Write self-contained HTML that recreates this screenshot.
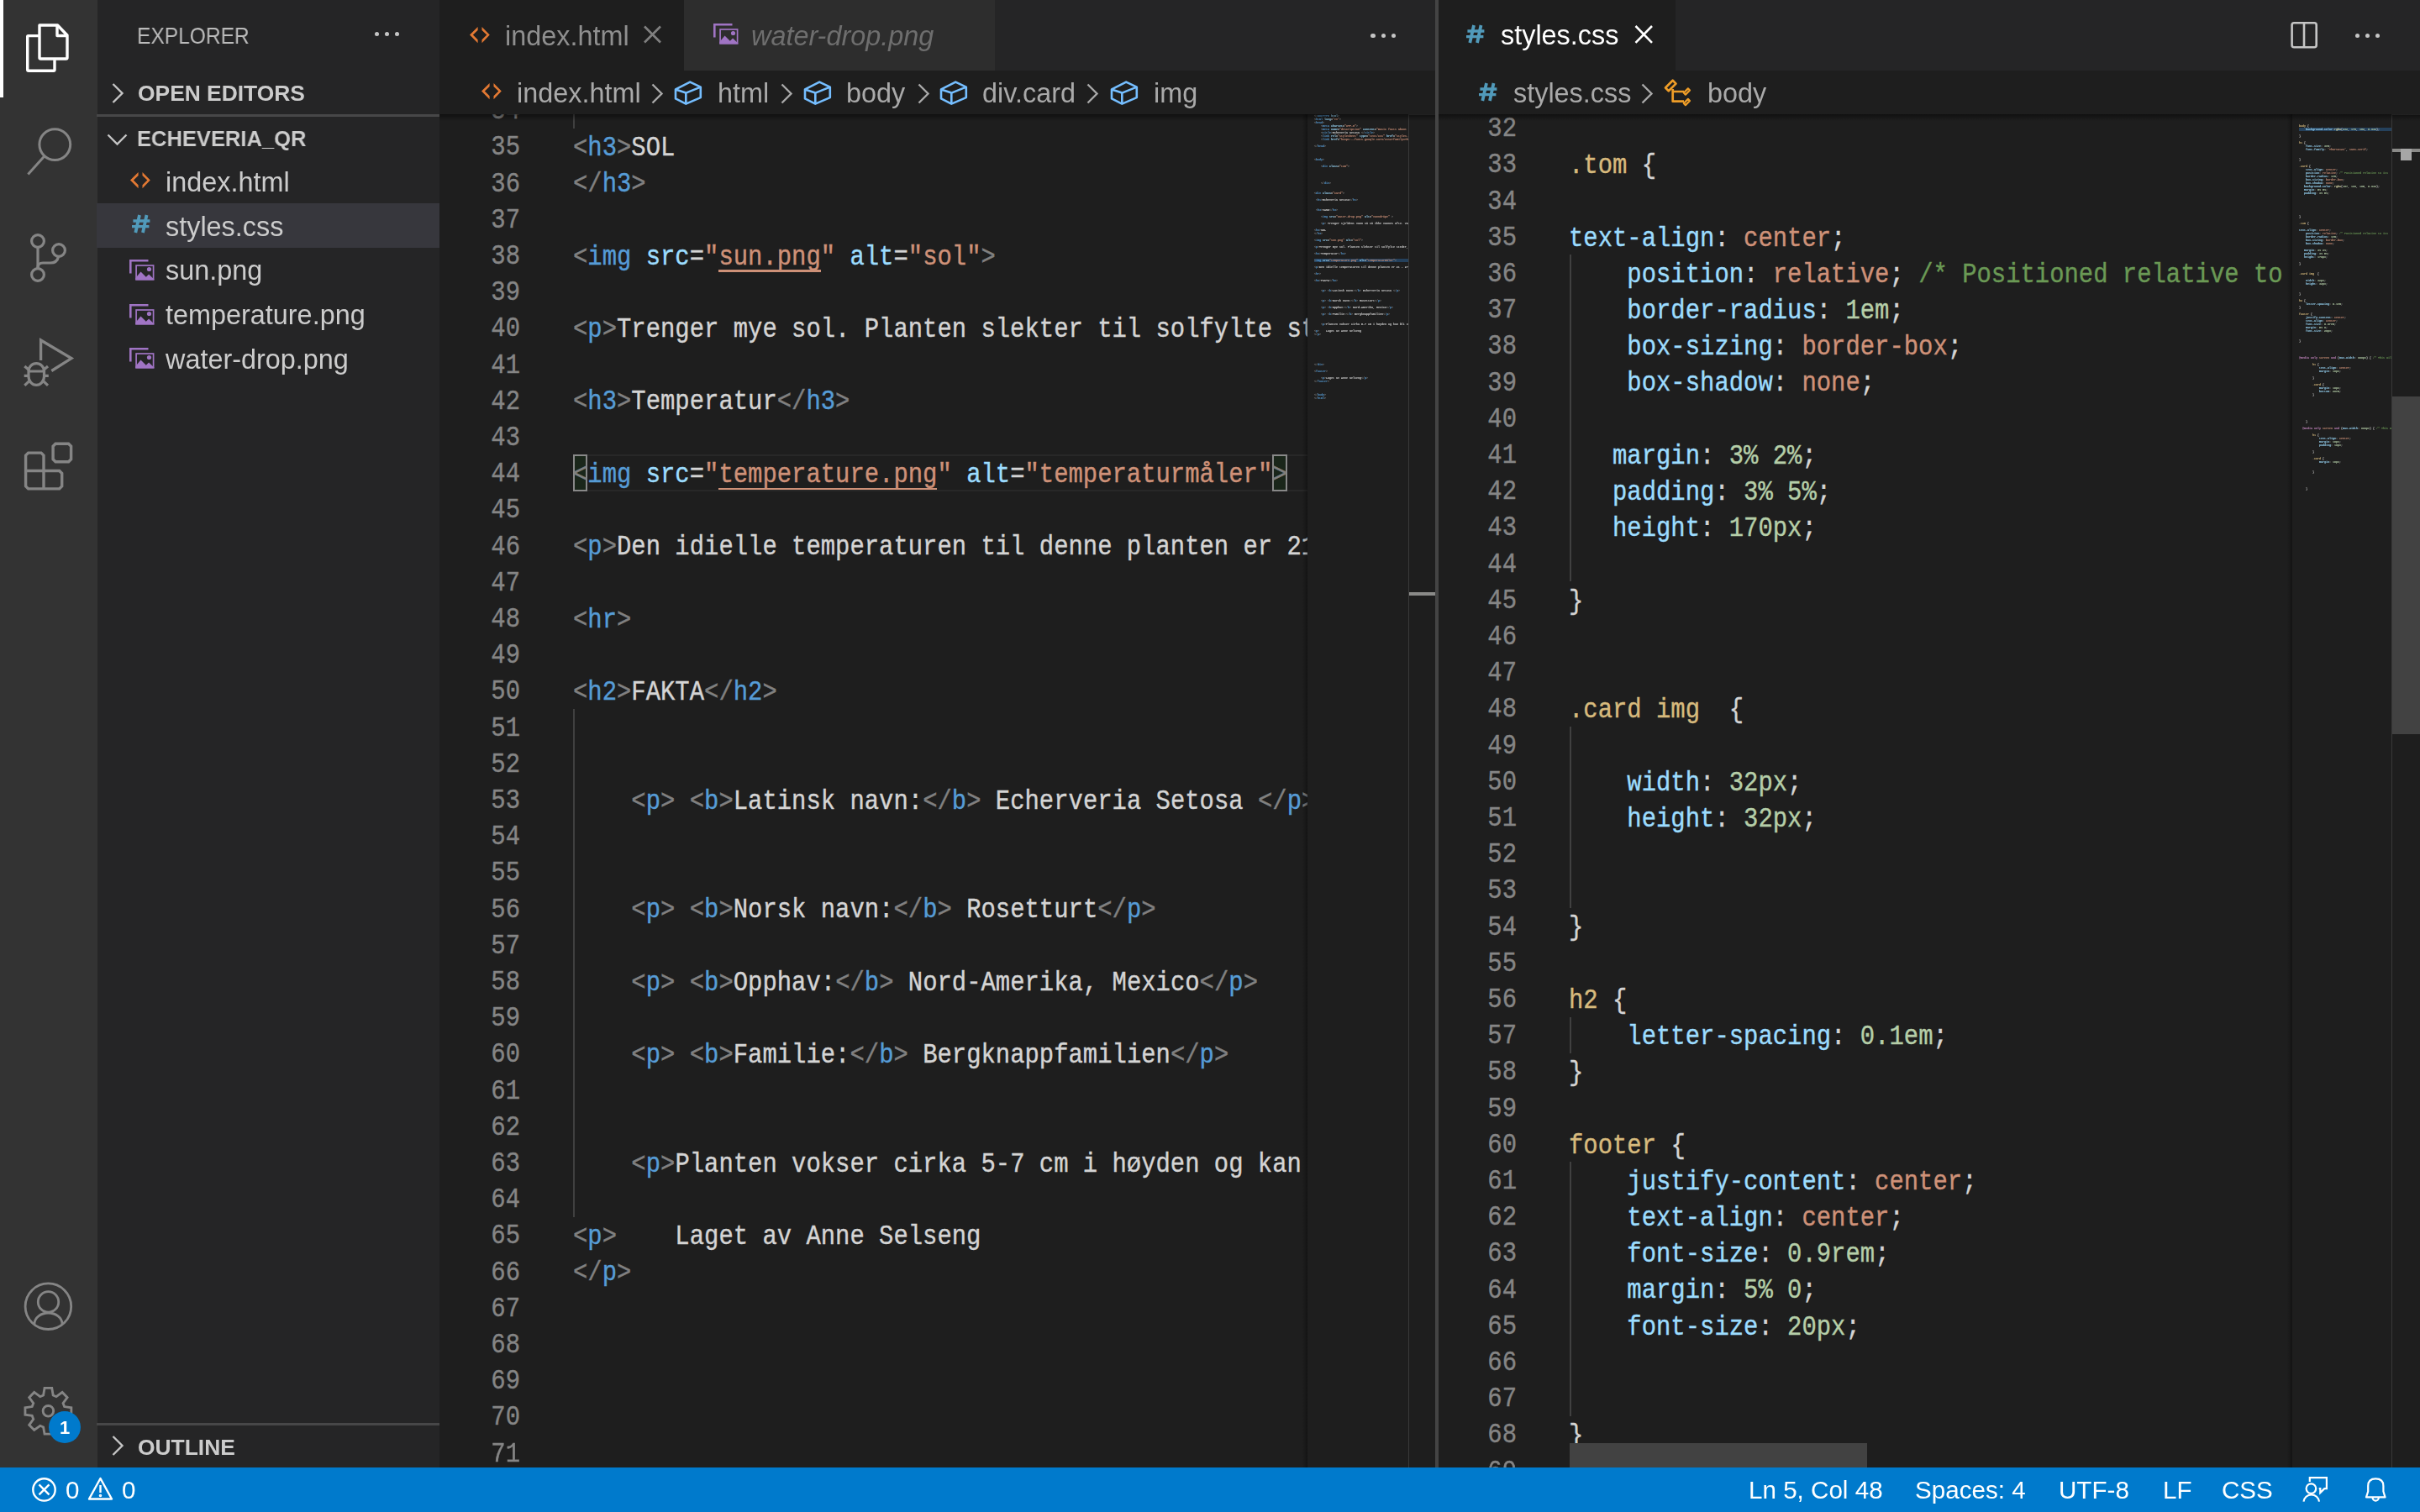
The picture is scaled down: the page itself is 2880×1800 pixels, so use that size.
<!DOCTYPE html><html><head><meta charset="utf-8"><style>

html,body{margin:0;padding:0;width:2880px;height:1800px;overflow:hidden;background:#1e1e1e}
.t{position:absolute;white-space:pre;line-height:0;height:0;will-change:transform}
.code{position:absolute;white-space:pre;font-family:'Liberation Mono',monospace;font-size:28.9px;line-height:0;height:0;transform:scaleY(1.12);transform-origin:0 7.5px;-webkit-text-stroke:0.35px currentColor}
.code span{-webkit-text-stroke:0.35px}
.lnum{position:absolute;width:200px;text-align:right;white-space:pre;font-family:'Liberation Mono',monospace;font-size:28.9px;line-height:0;height:0;color:#858585;transform:scaleY(1.12);transform-origin:0 7.5px;-webkit-text-stroke:0.35px #858585}
.mini{position:absolute;white-space:pre;font-family:'Liberation Mono',monospace;font-size:3.33px;line-height:4px;height:4px;font-weight:bold;will-change:transform}
svg{position:absolute;overflow:visible}

</style></head><body>
<div style="position:absolute;left:0.00px;top:0.00px;width:116.00px;height:1747.20px;background:#333333;"></div>
<div style="position:absolute;left:0.00px;top:0.00px;width:4.00px;height:116.00px;background:#ffffff;"></div>
<svg style="left:0;top:0" width="116" height="1748" viewBox="0 0 116 1748" fill="none">
<g stroke="#ffffff" stroke-width="3.4" stroke-linejoin="round">
<path d="M47 42.6 H33.5 Q32.7 42.6 32.7 43.5 V83 Q32.7 84.3 34 84.3 H63.8 Q65 84.3 65 83 V71.3"/>
<path d="M47 30 V68.5 Q47 70 48.5 70 H78.5 Q80 70 80 68.5 V42 L68.5 30 Z"/>
<path d="M68 30 V42.5 H80"/>
</g>
<g stroke="#858585" stroke-width="3" stroke-linecap="butt">
<circle cx="65.3" cy="172.1" r="18.4"/>
<path d="M52.3 186.5 L33.4 207.5"/>
</g>
<g stroke="#858585" stroke-width="3.2">
<circle cx="45" cy="287" r="7.4"/>
<circle cx="45" cy="327" r="7.4"/>
<circle cx="70" cy="298" r="7.4"/>
<path d="M45 294.6 V319.4"/>
<path d="M69.5 305.6 Q68 313 60 313 H51 Q45 313 45 319"/>
</g>
<g stroke="#858585" stroke-width="3.3" stroke-linejoin="miter">
<path d="M48.6 429 V405 L85 426.6 L61.3 441.5"/>
</g>
<g stroke="#858585" stroke-width="3.2">
<path d="M34 442 A9.25 9.3 0 0 1 52.5 442 V448 A9.25 10.4 0 0 1 34 448 Z M34 442 H52.5"/>
<path d="M29.3 436 L34.5 440.5 M57 436 L51.8 440.5 M28.7 447.4 H33 M53.5 447.4 H57.8 M29.3 458.8 L34.5 453.8 M57 458.8 L51.8 453.8"/>
</g>
<g stroke="#858585" stroke-width="3.4" stroke-linejoin="miter">
<path d="M30.6 542.1 L33.6 539.1 H49 L52 542.1 V560.5 H70.7 L73.7 563.5 V578.9 L70.7 581.9 H33.6 L30.6 578.9 Z"/>
<path d="M30.6 560.5 H52 V581.9"/>
<path d="M63.1 531.2 L66.1 528.2 H81.6 L84.6 531.2 V546.7 L81.6 549.7 H66.1 L63.1 546.7 Z"/>
</g>
<g stroke="#858585" stroke-width="2.8">
<circle cx="57.4" cy="1555.2" r="27.3"/>
<circle cx="57.5" cy="1549.9" r="12.2"/>
<path d="M41 1576 A16.5 13 0 0 1 74 1576"/>
</g>
<g stroke="#858585" stroke-width="3.0" stroke-linejoin="miter" transform="translate(57.4 1679.8) scale(0.95) translate(-57.4 -1679.8)">
<path id="gear" d="M52.8 1651 H62 L63.5 1660 L67.5 1661.8 L75 1656.3 L81.3 1662.8 L76 1670 L77.6 1674.3 L86.3 1675.6 V1684.4 L77.6 1685.7 L76 1690 L81.3 1697.2 L75 1703.6 L67.5 1698.2 L63.5 1700 L62 1708.6 H52.8 L51.3 1700 L47.3 1698.2 L39.8 1703.6 L33.5 1697.2 L38.8 1690 L37.2 1685.7 L28.5 1684.4 V1675.6 L37.2 1674.3 L38.8 1670 L33.5 1662.8 L39.8 1656.3 L47.3 1661.8 L51.3 1660 Z"/>
<circle cx="57.4" cy="1679.8" r="6.6"/>
</g>
<circle cx="77" cy="1699" r="19" fill="#007acc"/>
</svg>
<div class="t" style="left:70.50px;top:1699.50px;font-family:'Liberation Sans',sans-serif;font-size:22px;color:#ffffff;font-weight:bold;font-style:normal;">1</div>
<div style="position:absolute;left:116.00px;top:0.00px;width:408.00px;height:1747.20px;background:#252526;"></div>
<div class="t" style="left:163.20px;top:42.80px;font-family:'Liberation Sans',sans-serif;font-size:27.6px;color:#bbbbbb;font-weight:normal;font-style:normal;transform:scaleX(0.89);transform-origin:0 0">EXPLORER</div>
<div style="position:absolute;left:445.60px;top:37.90px;width:5.2px;height:5.2px;border-radius:50%;background:#c5c5c5"></div>
<div style="position:absolute;left:458.30px;top:37.90px;width:5.2px;height:5.2px;border-radius:50%;background:#c5c5c5"></div>
<div style="position:absolute;left:470.10px;top:37.90px;width:5.2px;height:5.2px;border-radius:50%;background:#c5c5c5"></div>
<svg style="left:0;top:0" width="524" height="1748" fill="none"><path d="M134.5 100 L145.5 111 L134.5 122" stroke="#c5c5c5" stroke-width="2.4"/><path d="M128.5 160.5 L139.5 171.5 L150.5 160.5" stroke="#c5c5c5" stroke-width="2.4"/><path d="M134.5 1710 L145.5 1721 L134.5 1732" stroke="#c5c5c5" stroke-width="2.4"/></svg>
<div class="t" style="left:164.00px;top:111.00px;font-family:'Liberation Sans',sans-serif;font-size:26.4px;color:#cccccc;font-weight:bold;font-style:normal;">OPEN EDITORS</div>
<div style="position:absolute;left:115.20px;top:136.20px;width:408.00px;height:2.40px;background:#474748;"></div>
<div class="t" style="left:163.20px;top:164.70px;font-family:'Liberation Sans',sans-serif;font-size:26.4px;color:#cccccc;font-weight:bold;font-style:normal;transform:scaleX(0.967);transform-origin:0 0">ECHEVERIA_QR</div>
<div style="position:absolute;left:115.20px;top:242.40px;width:408.00px;height:52.80px;background:#37373d;"></div>
<svg style="left:155.40px;top:204.80px" width="26.0" height="21.0" viewBox="0 0 26 21" fill="#e37933"><path d="M9.6 0 L0 9.6 L9.6 19.2 V15.3 L3.9 9.6 L9.6 3.9 Z M14.5 0 L23.8 9.6 L14.5 19.2 V15.3 L20.3 9.6 L14.5 3.9 Z"/></svg>
<div class="t" style="left:197.30px;top:216.70px;font-family:'Liberation Sans',sans-serif;font-size:32.4px;color:#cccccc;font-weight:normal;font-style:normal;">index.html</div>
<svg style="left:156.60px;top:256.00px" width="22.0" height="21.0" viewBox="0 0 22 21" fill="none" stroke="#519aba"><path d="M9 0 L4.3 21 M17.5 0 L13 21" stroke-width="3.8"/><path d="M1.4 7 H21.4 M0 13.7 H20.4" stroke-width="3.3"/></svg>
<div class="t" style="left:197.30px;top:269.50px;font-family:'Liberation Sans',sans-serif;font-size:32.4px;color:#cccccc;font-weight:normal;font-style:normal;">styles.css</div>
<svg style="left:153.50px;top:308.70px" width="32" height="28" fill="none"><path d="M1.3 16.5 V1.3 H22.5" stroke="#a074c4" stroke-width="2.6"/><rect x="8.1" y="7.0" width="20.5" height="16.6" stroke="#a074c4" stroke-width="1.7"/><path d="M7.3 24.4 V22 L13.5 14.5 L19.8 20.8 L23.1 17.5 L29.4 23.5 V24.4 Z" fill="#a074c4"/><circle cx="23.5" cy="11.5" r="2.6" fill="#a074c4"/></svg>
<div class="t" style="left:197.30px;top:322.30px;font-family:'Liberation Sans',sans-serif;font-size:32.4px;color:#cccccc;font-weight:normal;font-style:normal;">sun.png</div>
<svg style="left:153.50px;top:361.50px" width="32" height="28" fill="none"><path d="M1.3 16.5 V1.3 H22.5" stroke="#a074c4" stroke-width="2.6"/><rect x="8.1" y="7.0" width="20.5" height="16.6" stroke="#a074c4" stroke-width="1.7"/><path d="M7.3 24.4 V22 L13.5 14.5 L19.8 20.8 L23.1 17.5 L29.4 23.5 V24.4 Z" fill="#a074c4"/><circle cx="23.5" cy="11.5" r="2.6" fill="#a074c4"/></svg>
<div class="t" style="left:197.30px;top:375.10px;font-family:'Liberation Sans',sans-serif;font-size:32.4px;color:#cccccc;font-weight:normal;font-style:normal;">temperature.png</div>
<svg style="left:153.50px;top:414.30px" width="32" height="28" fill="none"><path d="M1.3 16.5 V1.3 H22.5" stroke="#a074c4" stroke-width="2.6"/><rect x="8.1" y="7.0" width="20.5" height="16.6" stroke="#a074c4" stroke-width="1.7"/><path d="M7.3 24.4 V22 L13.5 14.5 L19.8 20.8 L23.1 17.5 L29.4 23.5 V24.4 Z" fill="#a074c4"/><circle cx="23.5" cy="11.5" r="2.6" fill="#a074c4"/></svg>
<div class="t" style="left:197.30px;top:427.90px;font-family:'Liberation Sans',sans-serif;font-size:32.4px;color:#cccccc;font-weight:normal;font-style:normal;">water-drop.png</div>
<div style="position:absolute;left:115.20px;top:1694.40px;width:408.00px;height:2.40px;background:#474748;"></div>
<div class="t" style="left:164.00px;top:1723.10px;font-family:'Liberation Sans',sans-serif;font-size:26.4px;color:#cccccc;font-weight:bold;font-style:normal;">OUTLINE</div>
<div style="position:absolute;left:523.20px;top:0.00px;width:1184.80px;height:84.00px;background:#252526;"></div>
<div style="position:absolute;left:523.20px;top:0.00px;width:290.80px;height:84.00px;background:#1e1e1e;"></div>
<div style="position:absolute;left:814.00px;top:0.00px;width:369.80px;height:84.00px;background:#2d2d2d;"></div>
<svg style="left:559.00px;top:31.60px" width="26.0" height="21.0" viewBox="0 0 26 21" fill="#e37933"><path d="M9.6 0 L0 9.6 L9.6 19.2 V15.3 L3.9 9.6 L9.6 3.9 Z M14.5 0 L23.8 9.6 L14.5 19.2 V15.3 L20.3 9.6 L14.5 3.9 Z"/></svg>
<div class="t" style="left:600.80px;top:42.60px;font-family:'Liberation Sans',sans-serif;font-size:32.4px;color:#8f8f8f;font-weight:normal;font-style:normal;">index.html</div>
<svg style="left:0;top:0" width="2880" height="140" fill="none"><path d="M767 31.5 L786 50.5 M786 31.5 L767 50.5" stroke="#808080" stroke-width="2.6"/></svg>
<svg style="left:848.60px;top:28.00px" width="32" height="28" fill="none"><path d="M1.3 16.5 V1.3 H22.5" stroke="#a074c4" stroke-width="2.6"/><rect x="8.1" y="7.0" width="20.5" height="16.6" stroke="#a074c4" stroke-width="1.7"/><path d="M7.3 24.4 V22 L13.5 14.5 L19.8 20.8 L23.1 17.5 L29.4 23.5 V24.4 Z" fill="#a074c4"/><circle cx="23.5" cy="11.5" r="2.6" fill="#a074c4"/></svg>
<div class="t" style="left:894.00px;top:42.60px;font-family:'Liberation Sans',sans-serif;font-size:32.4px;color:#6e6e6e;font-weight:normal;font-style:italic;">water-drop.png</div>
<div style="position:absolute;left:1631.40px;top:40.20px;width:5.2px;height:5.2px;border-radius:50%;background:#c5c5c5"></div>
<div style="position:absolute;left:1643.90px;top:40.20px;width:5.2px;height:5.2px;border-radius:50%;background:#c5c5c5"></div>
<div style="position:absolute;left:1655.80px;top:40.20px;width:5.2px;height:5.2px;border-radius:50%;background:#c5c5c5"></div>
<div style="position:absolute;left:523.20px;top:84.00px;width:1184.80px;height:52.00px;background:#1e1e1e;"></div>
<svg style="left:572.90px;top:99.20px" width="26.0" height="21.0" viewBox="0 0 26 21" fill="#e37933"><path d="M9.6 0 L0 9.6 L9.6 19.2 V15.3 L3.9 9.6 L9.6 3.9 Z M14.5 0 L23.8 9.6 L14.5 19.2 V15.3 L20.3 9.6 L14.5 3.9 Z"/></svg>
<div class="t" style="left:614.80px;top:111.00px;font-family:'Liberation Sans',sans-serif;font-size:32.4px;color:#a9a9a9;font-weight:normal;font-style:normal;">index.html</div>
<svg style="left:775.40px;top:99.00px" width="16" height="26" fill="none"><path d="M1.5 1.5 L12.5 12.5 L1.5 23.5" stroke="#a9a9a9" stroke-width="2.4"/></svg>
<svg style="left:802.00px;top:96.40px" width="36" height="32" fill="none"><path d="M2 10.4 L19.2 1.6 L31.8 7.6 V20.1 L14.3 27.6 L2 21.4 Z M2 10.4 L14.3 14.6 L31.8 7.6 M14.3 14.6 V27.6" stroke="#75beff" stroke-width="2.6" stroke-linejoin="round"/></svg>
<div class="t" style="left:853.60px;top:111.00px;font-family:'Liberation Sans',sans-serif;font-size:32.4px;color:#a9a9a9;font-weight:normal;font-style:normal;">html</div>
<svg style="left:929.00px;top:99.00px" width="16" height="26" fill="none"><path d="M1.5 1.5 L12.5 12.5 L1.5 23.5" stroke="#a9a9a9" stroke-width="2.4"/></svg>
<svg style="left:956.00px;top:96.40px" width="36" height="32" fill="none"><path d="M2 10.4 L19.2 1.6 L31.8 7.6 V20.1 L14.3 27.6 L2 21.4 Z M2 10.4 L14.3 14.6 L31.8 7.6 M14.3 14.6 V27.6" stroke="#75beff" stroke-width="2.6" stroke-linejoin="round"/></svg>
<div class="t" style="left:1007.20px;top:111.00px;font-family:'Liberation Sans',sans-serif;font-size:32.4px;color:#a9a9a9;font-weight:normal;font-style:normal;">body</div>
<svg style="left:1092.00px;top:99.00px" width="16" height="26" fill="none"><path d="M1.5 1.5 L12.5 12.5 L1.5 23.5" stroke="#a9a9a9" stroke-width="2.4"/></svg>
<svg style="left:1118.40px;top:96.40px" width="36" height="32" fill="none"><path d="M2 10.4 L19.2 1.6 L31.8 7.6 V20.1 L14.3 27.6 L2 21.4 Z M2 10.4 L14.3 14.6 L31.8 7.6 M14.3 14.6 V27.6" stroke="#75beff" stroke-width="2.6" stroke-linejoin="round"/></svg>
<div class="t" style="left:1169.00px;top:111.00px;font-family:'Liberation Sans',sans-serif;font-size:32.4px;color:#a9a9a9;font-weight:normal;font-style:normal;">div.card</div>
<svg style="left:1293.30px;top:99.00px" width="16" height="26" fill="none"><path d="M1.5 1.5 L12.5 12.5 L1.5 23.5" stroke="#a9a9a9" stroke-width="2.4"/></svg>
<svg style="left:1320.80px;top:96.40px" width="36" height="32" fill="none"><path d="M2 10.4 L19.2 1.6 L31.8 7.6 V20.1 L14.3 27.6 L2 21.4 Z M2 10.4 L14.3 14.6 L31.8 7.6 M14.3 14.6 V27.6" stroke="#75beff" stroke-width="2.6" stroke-linejoin="round"/></svg>
<div class="t" style="left:1372.70px;top:111.00px;font-family:'Liberation Sans',sans-serif;font-size:32.4px;color:#a9a9a9;font-weight:normal;font-style:normal;">img</div>
<div style="position:absolute;left:523.2px;top:136px;width:1032.8px;height:1611.2px;overflow:hidden;background:#1e1e1e">
<div style="position:absolute;left:158.80px;top:405.40px;width:874.00px;height:40.80px;border-top:2.4px solid #282828;border-bottom:2.4px solid #282828;box-sizing:border-box;height:44.00px"></div>
<div style="position:absolute;left:158.80px;top:405.40px;width:17.34px;height:44.00px;border:2.2px solid #888888;background:rgba(0,100,0,0.12);box-sizing:border-box"></div>
<div style="position:absolute;left:991.12px;top:405.40px;width:17.34px;height:44.00px;border:2.2px solid #888888;background:rgba(0,100,0,0.12);box-sizing:border-box"></div>
<div style="position:absolute;left:332.20px;top:185.40px;width:121.38px;height:2.4px;background:#ce9178"></div>
<div style="position:absolute;left:332.20px;top:444.60px;width:260.10px;height:2.4px;background:#ce9178"></div>
<div style="position:absolute;left:158.80px;top:-26.60px;width:2.4px;height:43.20px;background:#404040"></div>
<div style="position:absolute;left:158.80px;top:707.80px;width:2.4px;height:604.80px;background:#404040"></div>
<div class="lnum" style="left:-104.20px;top:-1.90px">34</div>
<div class="lnum" style="left:-104.20px;top:41.30px">35</div>
<div class="code" style="left:158.80px;top:42.00px"><span style="color:#808080">&lt;</span><span style="color:#569cd6">h3</span><span style="color:#808080">&gt;</span><span style="color:#d4d4d4">SOL</span></div>
<div class="lnum" style="left:-104.20px;top:84.50px">36</div>
<div class="code" style="left:158.80px;top:85.20px"><span style="color:#808080">&lt;/</span><span style="color:#569cd6">h3</span><span style="color:#808080">&gt;</span></div>
<div class="lnum" style="left:-104.20px;top:127.70px">37</div>
<div class="lnum" style="left:-104.20px;top:170.90px">38</div>
<div class="code" style="left:158.80px;top:171.60px"><span style="color:#808080">&lt;</span><span style="color:#569cd6">img</span><span style="color:#d4d4d4"> </span><span style="color:#9cdcfe">src</span><span style="color:#d4d4d4">=</span><span style="color:#ce9178">"sun.png"</span><span style="color:#d4d4d4"> </span><span style="color:#9cdcfe">alt</span><span style="color:#d4d4d4">=</span><span style="color:#ce9178">"sol"</span><span style="color:#808080">&gt;</span></div>
<div class="lnum" style="left:-104.20px;top:214.10px">39</div>
<div class="lnum" style="left:-104.20px;top:257.30px">40</div>
<div class="code" style="left:158.80px;top:258.00px"><span style="color:#808080">&lt;</span><span style="color:#569cd6">p</span><span style="color:#808080">&gt;</span><span style="color:#d4d4d4">Trenger mye sol. Planten slekter til solfylte steder, </span></div>
<div class="lnum" style="left:-104.20px;top:300.50px">41</div>
<div class="lnum" style="left:-104.20px;top:343.70px">42</div>
<div class="code" style="left:158.80px;top:344.40px"><span style="color:#808080">&lt;</span><span style="color:#569cd6">h3</span><span style="color:#808080">&gt;</span><span style="color:#d4d4d4">Temperatur</span><span style="color:#808080">&lt;/</span><span style="color:#569cd6">h3</span><span style="color:#808080">&gt;</span></div>
<div class="lnum" style="left:-104.20px;top:386.90px">43</div>
<div class="lnum" style="left:-104.20px;top:430.10px">44</div>
<div class="code" style="left:158.80px;top:430.80px"><span style="color:#808080">&lt;</span><span style="color:#569cd6">img</span><span style="color:#d4d4d4"> </span><span style="color:#9cdcfe">src</span><span style="color:#d4d4d4">=</span><span style="color:#ce9178">"temperature.png"</span><span style="color:#d4d4d4"> </span><span style="color:#9cdcfe">alt</span><span style="color:#d4d4d4">=</span><span style="color:#ce9178">"temperaturmåler"</span><span style="color:#808080">&gt;</span></div>
<div class="lnum" style="left:-104.20px;top:473.30px">45</div>
<div class="lnum" style="left:-104.20px;top:516.50px">46</div>
<div class="code" style="left:158.80px;top:517.20px"><span style="color:#808080">&lt;</span><span style="color:#569cd6">p</span><span style="color:#808080">&gt;</span><span style="color:#d4d4d4">Den idielle temperaturen til denne planten er 21 - 27</span></div>
<div class="lnum" style="left:-104.20px;top:559.70px">47</div>
<div class="lnum" style="left:-104.20px;top:602.90px">48</div>
<div class="code" style="left:158.80px;top:603.60px"><span style="color:#808080">&lt;</span><span style="color:#569cd6">hr</span><span style="color:#808080">&gt;</span></div>
<div class="lnum" style="left:-104.20px;top:646.10px">49</div>
<div class="lnum" style="left:-104.20px;top:689.30px">50</div>
<div class="code" style="left:158.80px;top:690.00px"><span style="color:#808080">&lt;</span><span style="color:#569cd6">h2</span><span style="color:#808080">&gt;</span><span style="color:#d4d4d4">FAKTA</span><span style="color:#808080">&lt;/</span><span style="color:#569cd6">h2</span><span style="color:#808080">&gt;</span></div>
<div class="lnum" style="left:-104.20px;top:732.50px">51</div>
<div class="lnum" style="left:-104.20px;top:775.70px">52</div>
<div class="lnum" style="left:-104.20px;top:818.90px">53</div>
<div class="code" style="left:158.80px;top:819.60px"><span style="color:#d4d4d4">    </span><span style="color:#808080">&lt;</span><span style="color:#569cd6">p</span><span style="color:#808080">&gt;</span><span style="color:#d4d4d4"> </span><span style="color:#808080">&lt;</span><span style="color:#569cd6">b</span><span style="color:#808080">&gt;</span><span style="color:#d4d4d4">Latinsk navn:</span><span style="color:#808080">&lt;/</span><span style="color:#569cd6">b</span><span style="color:#808080">&gt;</span><span style="color:#d4d4d4"> Echerveria Setosa </span><span style="color:#808080">&lt;/</span><span style="color:#569cd6">p</span><span style="color:#808080">&gt;</span></div>
<div class="lnum" style="left:-104.20px;top:862.10px">54</div>
<div class="lnum" style="left:-104.20px;top:905.30px">55</div>
<div class="lnum" style="left:-104.20px;top:948.50px">56</div>
<div class="code" style="left:158.80px;top:949.20px"><span style="color:#d4d4d4">    </span><span style="color:#808080">&lt;</span><span style="color:#569cd6">p</span><span style="color:#808080">&gt;</span><span style="color:#d4d4d4"> </span><span style="color:#808080">&lt;</span><span style="color:#569cd6">b</span><span style="color:#808080">&gt;</span><span style="color:#d4d4d4">Norsk navn:</span><span style="color:#808080">&lt;/</span><span style="color:#569cd6">b</span><span style="color:#808080">&gt;</span><span style="color:#d4d4d4"> Rosetturt</span><span style="color:#808080">&lt;/</span><span style="color:#569cd6">p</span><span style="color:#808080">&gt;</span></div>
<div class="lnum" style="left:-104.20px;top:991.70px">57</div>
<div class="lnum" style="left:-104.20px;top:1034.90px">58</div>
<div class="code" style="left:158.80px;top:1035.60px"><span style="color:#d4d4d4">    </span><span style="color:#808080">&lt;</span><span style="color:#569cd6">p</span><span style="color:#808080">&gt;</span><span style="color:#d4d4d4"> </span><span style="color:#808080">&lt;</span><span style="color:#569cd6">b</span><span style="color:#808080">&gt;</span><span style="color:#d4d4d4">Opphav:</span><span style="color:#808080">&lt;/</span><span style="color:#569cd6">b</span><span style="color:#808080">&gt;</span><span style="color:#d4d4d4"> Nord-Amerika, Mexico</span><span style="color:#808080">&lt;/</span><span style="color:#569cd6">p</span><span style="color:#808080">&gt;</span></div>
<div class="lnum" style="left:-104.20px;top:1078.10px">59</div>
<div class="lnum" style="left:-104.20px;top:1121.30px">60</div>
<div class="code" style="left:158.80px;top:1122.00px"><span style="color:#d4d4d4">    </span><span style="color:#808080">&lt;</span><span style="color:#569cd6">p</span><span style="color:#808080">&gt;</span><span style="color:#d4d4d4"> </span><span style="color:#808080">&lt;</span><span style="color:#569cd6">b</span><span style="color:#808080">&gt;</span><span style="color:#d4d4d4">Familie:</span><span style="color:#808080">&lt;/</span><span style="color:#569cd6">b</span><span style="color:#808080">&gt;</span><span style="color:#d4d4d4"> Bergknappfamilien</span><span style="color:#808080">&lt;/</span><span style="color:#569cd6">p</span><span style="color:#808080">&gt;</span></div>
<div class="lnum" style="left:-104.20px;top:1164.50px">61</div>
<div class="lnum" style="left:-104.20px;top:1207.70px">62</div>
<div class="lnum" style="left:-104.20px;top:1250.90px">63</div>
<div class="code" style="left:158.80px;top:1251.60px"><span style="color:#d4d4d4">    </span><span style="color:#808080">&lt;</span><span style="color:#569cd6">p</span><span style="color:#808080">&gt;</span><span style="color:#d4d4d4">Planten vokser cirka 5-7 cm i høyden og kan bli 3</span></div>
<div class="lnum" style="left:-104.20px;top:1294.10px">64</div>
<div class="lnum" style="left:-104.20px;top:1337.30px">65</div>
<div class="code" style="left:158.80px;top:1338.00px"><span style="color:#808080">&lt;</span><span style="color:#569cd6">p</span><span style="color:#808080">&gt;</span><span style="color:#d4d4d4">    Laget av Anne Selseng</span></div>
<div class="lnum" style="left:-104.20px;top:1380.50px">66</div>
<div class="code" style="left:158.80px;top:1381.20px"><span style="color:#808080">&lt;/</span><span style="color:#569cd6">p</span><span style="color:#808080">&gt;</span></div>
<div class="lnum" style="left:-104.20px;top:1423.70px">67</div>
<div class="lnum" style="left:-104.20px;top:1466.90px">68</div>
<div class="lnum" style="left:-104.20px;top:1510.10px">69</div>
<div class="lnum" style="left:-104.20px;top:1553.30px">70</div>
<div class="lnum" style="left:-104.20px;top:1596.50px">71</div>
<div class="lnum" style="left:-104.20px;top:1639.70px">72</div>
</div>
<div style="position:absolute;left:1556px;top:136px;width:120px;height:1611.2px;overflow:hidden;background:#1e1e1e;">
<div style="position:absolute;left:8px;top:172.00px;width:120px;height:4px;background:#25415c"></div>
<div class="mini" style="left:8px;top:0.00px"><span style="color:#808080">&lt;!</span><span style="color:#569cd6">DOCTYPE</span><span style="color:#d4d4d4"> </span><span style="color:#9cdcfe">html</span><span style="color:#808080">&gt;</span></div>
<div class="mini" style="left:8px;top:4.00px"><span style="color:#808080">&lt;</span><span style="color:#569cd6">html</span><span style="color:#d4d4d4"> </span><span style="color:#9cdcfe">lang</span><span style="color:#d4d4d4">=</span><span style="color:#ce9178">"en"</span><span style="color:#808080">&gt;</span></div>
<div class="mini" style="left:8px;top:8.00px"><span style="color:#808080">&lt;</span><span style="color:#569cd6">head</span><span style="color:#808080">&gt;</span></div>
<div class="mini" style="left:8px;top:12.00px"><span style="color:#d4d4d4">    </span><span style="color:#808080">&lt;</span><span style="color:#569cd6">meta</span><span style="color:#d4d4d4"> </span><span style="color:#9cdcfe">charset</span><span style="color:#d4d4d4">=</span><span style="color:#ce9178">"UTF-8"</span><span style="color:#808080">&gt;</span></div>
<div class="mini" style="left:8px;top:16.00px"><span style="color:#d4d4d4">    </span><span style="color:#808080">&lt;</span><span style="color:#569cd6">meta</span><span style="color:#d4d4d4"> </span><span style="color:#9cdcfe">name</span><span style="color:#d4d4d4">=</span><span style="color:#ce9178">"description"</span><span style="color:#d4d4d4"> </span><span style="color:#9cdcfe">content</span><span style="color:#d4d4d4">=</span><span style="color:#ce9178">"Basic facts about Echeveria Setosa"</span><span style="color:#808080">&gt;</span></div>
<div class="mini" style="left:8px;top:20.00px"><span style="color:#d4d4d4">    </span><span style="color:#808080">&lt;</span><span style="color:#569cd6">title</span><span style="color:#808080">&gt;</span><span style="color:#d4d4d4">Echeveria Setosa </span><span style="color:#808080">&lt;/</span><span style="color:#569cd6">title</span><span style="color:#808080">&gt;</span></div>
<div class="mini" style="left:8px;top:24.00px"><span style="color:#d4d4d4">    </span><span style="color:#808080">&lt;</span><span style="color:#569cd6">link</span><span style="color:#d4d4d4"> </span><span style="color:#9cdcfe">rel</span><span style="color:#d4d4d4">=</span><span style="color:#ce9178">"stylesheet"</span><span style="color:#d4d4d4"> </span><span style="color:#9cdcfe">type</span><span style="color:#d4d4d4">=</span><span style="color:#ce9178">"text/css"</span><span style="color:#d4d4d4"> </span><span style="color:#9cdcfe">href</span><span style="color:#d4d4d4">=</span><span style="color:#ce9178">"styles.css"</span><span style="color:#808080">&gt;</span></div>
<div class="mini" style="left:8px;top:28.00px"><span style="color:#d4d4d4">    </span><span style="color:#808080">&lt;</span><span style="color:#569cd6">link</span><span style="color:#d4d4d4"> </span><span style="color:#9cdcfe">href</span><span style="color:#d4d4d4">=</span><span style="color:#ce9178">"hxxps:--fonts.gooqle.corn/css2?family=Tharsa-Regular"</span><span style="color:#808080">&gt;</span></div>
<div class="mini" style="left:8px;top:36.00px"><span style="color:#808080">&lt;/</span><span style="color:#569cd6">head</span><span style="color:#808080">&gt;</span></div>
<div class="mini" style="left:8px;top:52.00px"><span style="color:#808080">&lt;</span><span style="color:#569cd6">body</span><span style="color:#808080">&gt;</span></div>
<div class="mini" style="left:8px;top:60.00px"><span style="color:#d4d4d4">    </span><span style="color:#808080">&lt;</span><span style="color:#569cd6">div</span><span style="color:#d4d4d4"> </span><span style="color:#9cdcfe">class</span><span style="color:#d4d4d4">=</span><span style="color:#ce9178">"tom"</span><span style="color:#808080">&gt;</span></div>
<div class="mini" style="left:8px;top:80.00px"><span style="color:#d4d4d4">    </span><span style="color:#808080">&lt;/</span><span style="color:#569cd6">div</span><span style="color:#808080">&gt;</span></div>
<div class="mini" style="left:8px;top:92.00px"><span style="color:#808080">&lt;</span><span style="color:#569cd6">div</span><span style="color:#d4d4d4"> </span><span style="color:#9cdcfe">class</span><span style="color:#d4d4d4">=</span><span style="color:#ce9178">"card"</span><span style="color:#808080">&gt;</span></div>
<div class="mini" style="left:8px;top:100.00px"><span style="color:#d4d4d4"> </span><span style="color:#808080">&lt;</span><span style="color:#569cd6">h1</span><span style="color:#808080">&gt;</span><span style="color:#d4d4d4">Echeveria Setosa</span><span style="color:#808080">&lt;/</span><span style="color:#569cd6">h1</span><span style="color:#808080">&gt;</span></div>
<div class="mini" style="left:8px;top:112.00px"><span style="color:#d4d4d4"> </span><span style="color:#808080">&lt;</span><span style="color:#569cd6">h3</span><span style="color:#808080">&gt;</span><span style="color:#d4d4d4">VANN</span><span style="color:#808080">&lt;/</span><span style="color:#569cd6">h3</span><span style="color:#808080">&gt;</span></div>
<div class="mini" style="left:8px;top:120.00px"><span style="color:#d4d4d4">    </span><span style="color:#808080">&lt;</span><span style="color:#569cd6">img</span><span style="color:#d4d4d4"> </span><span style="color:#9cdcfe">src</span><span style="color:#d4d4d4">=</span><span style="color:#ce9178">"water-drop.png"</span><span style="color:#d4d4d4"> </span><span style="color:#9cdcfe">alt</span><span style="color:#d4d4d4">=</span><span style="color:#ce9178">"vanndråpe"</span><span style="color:#d4d4d4"> </span><span style="color:#808080">&gt;</span></div>
<div class="mini" style="left:8px;top:128.00px"><span style="color:#d4d4d4">    </span><span style="color:#808080">&lt;</span><span style="color:#569cd6">p</span><span style="color:#808080">&gt;</span><span style="color:#d4d4d4"> Trenger sjeldent vann så så ikke vannes ofte. Vann</span></div>
<div class="mini" style="left:8px;top:136.00px"><span style="color:#808080">&lt;</span><span style="color:#569cd6">h3</span><span style="color:#808080">&gt;</span><span style="color:#d4d4d4">SOL</span></div>
<div class="mini" style="left:8px;top:140.00px"><span style="color:#808080">&lt;/</span><span style="color:#569cd6">h3</span><span style="color:#808080">&gt;</span></div>
<div class="mini" style="left:8px;top:148.00px"><span style="color:#808080">&lt;</span><span style="color:#569cd6">img</span><span style="color:#d4d4d4"> </span><span style="color:#9cdcfe">src</span><span style="color:#d4d4d4">=</span><span style="color:#ce9178">"sun.png"</span><span style="color:#d4d4d4"> </span><span style="color:#9cdcfe">alt</span><span style="color:#d4d4d4">=</span><span style="color:#ce9178">"sol"</span><span style="color:#808080">&gt;</span></div>
<div class="mini" style="left:8px;top:156.00px"><span style="color:#808080">&lt;</span><span style="color:#569cd6">p</span><span style="color:#808080">&gt;</span><span style="color:#d4d4d4">Trenger mye sol. Planten slekter til solfylte steder, </span></div>
<div class="mini" style="left:8px;top:164.00px"><span style="color:#808080">&lt;</span><span style="color:#569cd6">h3</span><span style="color:#808080">&gt;</span><span style="color:#d4d4d4">Temperatur</span><span style="color:#808080">&lt;/</span><span style="color:#569cd6">h3</span><span style="color:#808080">&gt;</span></div>
<div class="mini" style="left:8px;top:172.00px"><span style="color:#808080">&lt;</span><span style="color:#569cd6">img</span><span style="color:#d4d4d4"> </span><span style="color:#9cdcfe">src</span><span style="color:#d4d4d4">=</span><span style="color:#ce9178">"temperature.png"</span><span style="color:#d4d4d4"> </span><span style="color:#9cdcfe">alt</span><span style="color:#d4d4d4">=</span><span style="color:#ce9178">"temperaturmåler"</span><span style="color:#808080">&gt;</span></div>
<div class="mini" style="left:8px;top:180.00px"><span style="color:#808080">&lt;</span><span style="color:#569cd6">p</span><span style="color:#808080">&gt;</span><span style="color:#d4d4d4">Den idielle temperaturen til denne planten er 21 - 27</span></div>
<div class="mini" style="left:8px;top:188.00px"><span style="color:#808080">&lt;</span><span style="color:#569cd6">hr</span><span style="color:#808080">&gt;</span></div>
<div class="mini" style="left:8px;top:196.00px"><span style="color:#808080">&lt;</span><span style="color:#569cd6">h2</span><span style="color:#808080">&gt;</span><span style="color:#d4d4d4">FAKTA</span><span style="color:#808080">&lt;/</span><span style="color:#569cd6">h2</span><span style="color:#808080">&gt;</span></div>
<div class="mini" style="left:8px;top:208.00px"><span style="color:#d4d4d4">    </span><span style="color:#808080">&lt;</span><span style="color:#569cd6">p</span><span style="color:#808080">&gt;</span><span style="color:#d4d4d4"> </span><span style="color:#808080">&lt;</span><span style="color:#569cd6">b</span><span style="color:#808080">&gt;</span><span style="color:#d4d4d4">Latinsk navn:</span><span style="color:#808080">&lt;/</span><span style="color:#569cd6">b</span><span style="color:#808080">&gt;</span><span style="color:#d4d4d4"> Echerveria Setosa </span><span style="color:#808080">&lt;/</span><span style="color:#569cd6">p</span><span style="color:#808080">&gt;</span></div>
<div class="mini" style="left:8px;top:220.00px"><span style="color:#d4d4d4">    </span><span style="color:#808080">&lt;</span><span style="color:#569cd6">p</span><span style="color:#808080">&gt;</span><span style="color:#d4d4d4"> </span><span style="color:#808080">&lt;</span><span style="color:#569cd6">b</span><span style="color:#808080">&gt;</span><span style="color:#d4d4d4">Norsk navn:</span><span style="color:#808080">&lt;/</span><span style="color:#569cd6">b</span><span style="color:#808080">&gt;</span><span style="color:#d4d4d4"> Rosetturt</span><span style="color:#808080">&lt;/</span><span style="color:#569cd6">p</span><span style="color:#808080">&gt;</span></div>
<div class="mini" style="left:8px;top:228.00px"><span style="color:#d4d4d4">    </span><span style="color:#808080">&lt;</span><span style="color:#569cd6">p</span><span style="color:#808080">&gt;</span><span style="color:#d4d4d4"> </span><span style="color:#808080">&lt;</span><span style="color:#569cd6">b</span><span style="color:#808080">&gt;</span><span style="color:#d4d4d4">Opphav:</span><span style="color:#808080">&lt;/</span><span style="color:#569cd6">b</span><span style="color:#808080">&gt;</span><span style="color:#d4d4d4"> Nord-Amerika, Mexico</span><span style="color:#808080">&lt;/</span><span style="color:#569cd6">p</span><span style="color:#808080">&gt;</span></div>
<div class="mini" style="left:8px;top:236.00px"><span style="color:#d4d4d4">    </span><span style="color:#808080">&lt;</span><span style="color:#569cd6">p</span><span style="color:#808080">&gt;</span><span style="color:#d4d4d4"> </span><span style="color:#808080">&lt;</span><span style="color:#569cd6">b</span><span style="color:#808080">&gt;</span><span style="color:#d4d4d4">Familie:</span><span style="color:#808080">&lt;/</span><span style="color:#569cd6">b</span><span style="color:#808080">&gt;</span><span style="color:#d4d4d4"> Bergknappfamilien</span><span style="color:#808080">&lt;/</span><span style="color:#569cd6">p</span><span style="color:#808080">&gt;</span></div>
<div class="mini" style="left:8px;top:248.00px"><span style="color:#d4d4d4">    </span><span style="color:#808080">&lt;</span><span style="color:#569cd6">p</span><span style="color:#808080">&gt;</span><span style="color:#d4d4d4">Planten vokser cirka 5-7 cm i høyden og kan bli 3</span></div>
<div class="mini" style="left:8px;top:256.00px"><span style="color:#808080">&lt;</span><span style="color:#569cd6">p</span><span style="color:#808080">&gt;</span><span style="color:#d4d4d4">    Laget av Anne Selseng</span></div>
<div class="mini" style="left:8px;top:260.00px"><span style="color:#808080">&lt;/</span><span style="color:#569cd6">p</span><span style="color:#808080">&gt;</span></div>
<div class="mini" style="left:8px;top:296.00px"><span style="color:#808080">&lt;/</span><span style="color:#569cd6">div</span><span style="color:#808080">&gt;</span></div>
<div class="mini" style="left:8px;top:304.00px"><span style="color:#808080">&lt;</span><span style="color:#569cd6">footer</span><span style="color:#808080">&gt;</span></div>
<div class="mini" style="left:8px;top:312.00px"><span style="color:#d4d4d4">    </span><span style="color:#808080">&lt;</span><span style="color:#569cd6">p</span><span style="color:#808080">&gt;</span><span style="color:#d4d4d4">Laget av Anne Selseng</span><span style="color:#808080">&lt;/</span><span style="color:#569cd6">p</span><span style="color:#808080">&gt;</span></div>
<div class="mini" style="left:8px;top:316.00px"><span style="color:#808080">&lt;/</span><span style="color:#569cd6">footer</span><span style="color:#808080">&gt;</span></div>
<div class="mini" style="left:8px;top:332.00px"><span style="color:#808080">&lt;/</span><span style="color:#569cd6">body</span><span style="color:#808080">&gt;</span></div>
<div class="mini" style="left:8px;top:336.00px"><span style="color:#808080">&lt;/</span><span style="color:#569cd6">html</span><span style="color:#808080">&gt;</span></div>
</div>
<div style="position:absolute;left:1550px;top:136px;width:6px;height:1611.2px;background:linear-gradient(to right,rgba(0,0,0,0),rgba(0,0,0,0.35))"></div>
<div style="position:absolute;left:1676.00px;top:136.00px;width:32.00px;height:1611.20px;background:#1e1e1e;"></div>
<div style="position:absolute;left:1676.00px;top:136.00px;width:1.20px;height:1611.20px;background:#3a3a3a;"></div>
<div style="position:absolute;left:1676.00px;top:136.00px;width:32.00px;height:1.20px;background:#3a3a3a;"></div>
<div style="position:absolute;left:1677.00px;top:704.80px;width:31.00px;height:4.20px;background:#8a8a88;"></div>
<div style="position:absolute;left:1708.00px;top:0.00px;width:4.00px;height:1747.20px;background:#444444;"></div>
<div style="position:absolute;left:1712.00px;top:0.00px;width:1168.00px;height:84.00px;background:#252526;"></div>
<div style="position:absolute;left:1712.00px;top:0.00px;width:282.00px;height:84.00px;background:#1e1e1e;"></div>
<svg style="left:1744.90px;top:29.90px" width="22.0" height="21.0" viewBox="0 0 22 21" fill="none" stroke="#519aba"><path d="M9 0 L4.3 21 M17.5 0 L13 21" stroke-width="3.8"/><path d="M1.4 7 H21.4 M0 13.7 H20.4" stroke-width="3.3"/></svg>
<div class="t" style="left:1786.40px;top:42.30px;font-family:'Liberation Sans',sans-serif;font-size:32.4px;color:#ffffff;font-weight:normal;font-style:normal;">styles.css</div>
<svg style="left:0;top:0" width="2880" height="140" fill="none"><path d="M1946.5 31 L1966 50.8 M1966 31 L1946.5 50.8" stroke="#ffffff" stroke-width="2.6"/></svg>
<svg style="left:2720px;top:20px" width="50" height="50" fill="none"><rect x="7.6" y="7.3" width="29.1" height="28.9" rx="2.5" stroke="#c5c5c5" stroke-width="2.6"/><path d="M22 7.3 V36.2" stroke="#c5c5c5" stroke-width="2.6"/></svg>
<div style="position:absolute;left:2802.90px;top:40.20px;width:5.2px;height:5.2px;border-radius:50%;background:#c5c5c5"></div>
<div style="position:absolute;left:2815.10px;top:40.20px;width:5.2px;height:5.2px;border-radius:50%;background:#c5c5c5"></div>
<div style="position:absolute;left:2827.00px;top:40.20px;width:5.2px;height:5.2px;border-radius:50%;background:#c5c5c5"></div>
<div style="position:absolute;left:1712.00px;top:84.00px;width:1168.00px;height:52.00px;background:#1e1e1e;"></div>
<svg style="left:1760.00px;top:98.50px" width="22.0" height="21.0" viewBox="0 0 22 21" fill="none" stroke="#519aba"><path d="M9 0 L4.3 21 M17.5 0 L13 21" stroke-width="3.8"/><path d="M1.4 7 H21.4 M0 13.7 H20.4" stroke-width="3.3"/></svg>
<div class="t" style="left:1800.50px;top:110.60px;font-family:'Liberation Sans',sans-serif;font-size:32.4px;color:#a9a9a9;font-weight:normal;font-style:normal;">styles.css</div>
<svg style="left:1953.00px;top:98.50px" width="16" height="26" fill="none"><path d="M1.5 1.5 L12.5 12.5 L1.5 23.5" stroke="#a9a9a9" stroke-width="2.4"/></svg>
<svg style="left:1970px;top:88px" width="50" height="44" fill="none" stroke="#ee9d28" stroke-width="2.7" stroke-linejoin="round"><path d="M20.7 7.8 L24.5 11.6 L15.8 20.3 L12 16.5 Z"/><path d="M38.9 17.4 L41.0 19.5 L35.9 24.6 L33.8 22.5 Z" stroke-width="2.2"/><path d="M38.9 29.9 L41.0 32 L35.9 37.1 L33.8 35 Z" stroke-width="2.2"/><path d="M20.7 18 V32.7 H34 M20.7 21 H34"/></svg>
<div class="t" style="left:2032.00px;top:110.60px;font-family:'Liberation Sans',sans-serif;font-size:32.4px;color:#a9a9a9;font-weight:normal;font-style:normal;">body</div>
<div style="position:absolute;left:1712px;top:136px;width:1016px;height:1611.2px;overflow:hidden;background:#1e1e1e">
<div style="position:absolute;left:156.00px;top:167.30px;width:2.4px;height:388.80px;background:#404040"></div>
<div style="position:absolute;left:156.00px;top:728.90px;width:2.4px;height:216.00px;background:#404040"></div>
<div style="position:absolute;left:156.00px;top:1074.50px;width:2.4px;height:43.20px;background:#404040"></div>
<div style="position:absolute;left:156.00px;top:1247.30px;width:2.4px;height:302.40px;background:#404040"></div>
<div class="lnum" style="left:-107.00px;top:19.20px">32</div>
<div class="lnum" style="left:-107.00px;top:62.40px">33</div>
<div class="code" style="left:155.00px;top:63.10px"><span style="color:#d7ba7d">.tom</span><span style="color:#d4d4d4"> </span><span style="color:#d4d4d4">{</span></div>
<div class="lnum" style="left:-107.00px;top:105.60px">34</div>
<div class="lnum" style="left:-107.00px;top:148.80px">35</div>
<div class="code" style="left:155.00px;top:149.50px"><span style="color:#9cdcfe">text-align</span><span style="color:#d4d4d4">:</span><span style="color:#d4d4d4"> </span><span style="color:#ce9178">center</span><span style="color:#d4d4d4">;</span></div>
<div class="lnum" style="left:-107.00px;top:192.00px">36</div>
<div class="code" style="left:155.00px;top:192.70px"><span style="color:#d4d4d4">    </span><span style="color:#9cdcfe">position</span><span style="color:#d4d4d4">:</span><span style="color:#d4d4d4"> </span><span style="color:#ce9178">relative</span><span style="color:#d4d4d4">;</span><span style="color:#d4d4d4"> </span><span style="color:#6a9955">/* Positioned relative to its</span></div>
<div class="lnum" style="left:-107.00px;top:235.20px">37</div>
<div class="code" style="left:155.00px;top:235.90px"><span style="color:#d4d4d4">    </span><span style="color:#9cdcfe">border-radius</span><span style="color:#d4d4d4">:</span><span style="color:#d4d4d4"> </span><span style="color:#b5cea8">1em</span><span style="color:#d4d4d4">;</span></div>
<div class="lnum" style="left:-107.00px;top:278.40px">38</div>
<div class="code" style="left:155.00px;top:279.10px"><span style="color:#d4d4d4">    </span><span style="color:#9cdcfe">box-sizing</span><span style="color:#d4d4d4">:</span><span style="color:#d4d4d4"> </span><span style="color:#ce9178">border-box</span><span style="color:#d4d4d4">;</span></div>
<div class="lnum" style="left:-107.00px;top:321.60px">39</div>
<div class="code" style="left:155.00px;top:322.30px"><span style="color:#d4d4d4">    </span><span style="color:#9cdcfe">box-shadow</span><span style="color:#d4d4d4">:</span><span style="color:#d4d4d4"> </span><span style="color:#ce9178">none</span><span style="color:#d4d4d4">;</span></div>
<div class="lnum" style="left:-107.00px;top:364.80px">40</div>
<div class="lnum" style="left:-107.00px;top:408.00px">41</div>
<div class="code" style="left:155.00px;top:408.70px"><span style="color:#d4d4d4">   </span><span style="color:#9cdcfe">margin</span><span style="color:#d4d4d4">:</span><span style="color:#d4d4d4"> </span><span style="color:#b5cea8">3%</span><span style="color:#d4d4d4"> </span><span style="color:#b5cea8">2%</span><span style="color:#d4d4d4">;</span></div>
<div class="lnum" style="left:-107.00px;top:451.20px">42</div>
<div class="code" style="left:155.00px;top:451.90px"><span style="color:#d4d4d4">   </span><span style="color:#9cdcfe">padding</span><span style="color:#d4d4d4">:</span><span style="color:#d4d4d4"> </span><span style="color:#b5cea8">3%</span><span style="color:#d4d4d4"> </span><span style="color:#b5cea8">5%</span><span style="color:#d4d4d4">;</span></div>
<div class="lnum" style="left:-107.00px;top:494.40px">43</div>
<div class="code" style="left:155.00px;top:495.10px"><span style="color:#d4d4d4">   </span><span style="color:#9cdcfe">height</span><span style="color:#d4d4d4">:</span><span style="color:#d4d4d4"> </span><span style="color:#b5cea8">170px</span><span style="color:#d4d4d4">;</span></div>
<div class="lnum" style="left:-107.00px;top:537.60px">44</div>
<div class="lnum" style="left:-107.00px;top:580.80px">45</div>
<div class="code" style="left:155.00px;top:581.50px"><span style="color:#d4d4d4">}</span></div>
<div class="lnum" style="left:-107.00px;top:624.00px">46</div>
<div class="lnum" style="left:-107.00px;top:667.20px">47</div>
<div class="lnum" style="left:-107.00px;top:710.40px">48</div>
<div class="code" style="left:155.00px;top:711.10px"><span style="color:#d7ba7d">.card</span><span style="color:#d4d4d4"> </span><span style="color:#d7ba7d">img</span><span style="color:#d4d4d4">  </span><span style="color:#d4d4d4">{</span></div>
<div class="lnum" style="left:-107.00px;top:753.60px">49</div>
<div class="lnum" style="left:-107.00px;top:796.80px">50</div>
<div class="code" style="left:155.00px;top:797.50px"><span style="color:#d4d4d4">    </span><span style="color:#9cdcfe">width</span><span style="color:#d4d4d4">:</span><span style="color:#d4d4d4"> </span><span style="color:#b5cea8">32px</span><span style="color:#d4d4d4">;</span></div>
<div class="lnum" style="left:-107.00px;top:840.00px">51</div>
<div class="code" style="left:155.00px;top:840.70px"><span style="color:#d4d4d4">    </span><span style="color:#9cdcfe">height</span><span style="color:#d4d4d4">:</span><span style="color:#d4d4d4"> </span><span style="color:#b5cea8">32px</span><span style="color:#d4d4d4">;</span></div>
<div class="lnum" style="left:-107.00px;top:883.20px">52</div>
<div class="lnum" style="left:-107.00px;top:926.40px">53</div>
<div class="lnum" style="left:-107.00px;top:969.60px">54</div>
<div class="code" style="left:155.00px;top:970.30px"><span style="color:#d4d4d4">}</span></div>
<div class="lnum" style="left:-107.00px;top:1012.80px">55</div>
<div class="lnum" style="left:-107.00px;top:1056.00px">56</div>
<div class="code" style="left:155.00px;top:1056.70px"><span style="color:#d7ba7d">h2</span><span style="color:#d4d4d4"> </span><span style="color:#d4d4d4">{</span></div>
<div class="lnum" style="left:-107.00px;top:1099.20px">57</div>
<div class="code" style="left:155.00px;top:1099.90px"><span style="color:#d4d4d4">    </span><span style="color:#9cdcfe">letter-spacing</span><span style="color:#d4d4d4">:</span><span style="color:#d4d4d4"> </span><span style="color:#b5cea8">0.1em</span><span style="color:#d4d4d4">;</span></div>
<div class="lnum" style="left:-107.00px;top:1142.40px">58</div>
<div class="code" style="left:155.00px;top:1143.10px"><span style="color:#d4d4d4">}</span></div>
<div class="lnum" style="left:-107.00px;top:1185.60px">59</div>
<div class="lnum" style="left:-107.00px;top:1228.80px">60</div>
<div class="code" style="left:155.00px;top:1229.50px"><span style="color:#d7ba7d">footer</span><span style="color:#d4d4d4"> </span><span style="color:#d4d4d4">{</span></div>
<div class="lnum" style="left:-107.00px;top:1272.00px">61</div>
<div class="code" style="left:155.00px;top:1272.70px"><span style="color:#d4d4d4">    </span><span style="color:#9cdcfe">justify-content</span><span style="color:#d4d4d4">:</span><span style="color:#d4d4d4"> </span><span style="color:#ce9178">center</span><span style="color:#d4d4d4">;</span></div>
<div class="lnum" style="left:-107.00px;top:1315.20px">62</div>
<div class="code" style="left:155.00px;top:1315.90px"><span style="color:#d4d4d4">    </span><span style="color:#9cdcfe">text-align</span><span style="color:#d4d4d4">:</span><span style="color:#d4d4d4"> </span><span style="color:#ce9178">center</span><span style="color:#d4d4d4">;</span></div>
<div class="lnum" style="left:-107.00px;top:1358.40px">63</div>
<div class="code" style="left:155.00px;top:1359.10px"><span style="color:#d4d4d4">    </span><span style="color:#9cdcfe">font-size</span><span style="color:#d4d4d4">:</span><span style="color:#d4d4d4"> </span><span style="color:#b5cea8">0.9rem</span><span style="color:#d4d4d4">;</span></div>
<div class="lnum" style="left:-107.00px;top:1401.60px">64</div>
<div class="code" style="left:155.00px;top:1402.30px"><span style="color:#d4d4d4">    </span><span style="color:#9cdcfe">margin</span><span style="color:#d4d4d4">:</span><span style="color:#d4d4d4"> </span><span style="color:#b5cea8">5%</span><span style="color:#d4d4d4"> </span><span style="color:#b5cea8">0</span><span style="color:#d4d4d4">;</span></div>
<div class="lnum" style="left:-107.00px;top:1444.80px">65</div>
<div class="code" style="left:155.00px;top:1445.50px"><span style="color:#d4d4d4">    </span><span style="color:#9cdcfe">font-size</span><span style="color:#d4d4d4">:</span><span style="color:#d4d4d4"> </span><span style="color:#b5cea8">20px</span><span style="color:#d4d4d4">;</span></div>
<div class="lnum" style="left:-107.00px;top:1488.00px">66</div>
<div class="lnum" style="left:-107.00px;top:1531.20px">67</div>
<div class="lnum" style="left:-107.00px;top:1574.40px">68</div>
<div class="code" style="left:155.00px;top:1575.10px"><span style="color:#d4d4d4">}</span></div>
<div class="lnum" style="left:-107.00px;top:1617.60px">69</div>
<div class="lnum" style="left:-107.00px;top:1660.80px">70</div>
</div>
<div style="position:absolute;left:2728px;top:136px;width:118px;height:1611.2px;overflow:hidden;background:#1e1e1e;">
<div style="position:absolute;left:8px;top:16.00px;width:118px;height:4px;background:#25415c"></div>
<div class="mini" style="left:8px;top:12.00px"><span style="color:#d7ba7d">body</span><span style="color:#d4d4d4"> </span><span style="color:#d4d4d4">{</span></div>
<div class="mini" style="left:8px;top:16.00px"><span style="color:#d4d4d4">    </span><span style="color:#9cdcfe">background-color</span><span style="color:#d4d4d4">:</span><span style="color:#dcdcaa">rgba</span><span style="color:#d4d4d4">(</span><span style="color:#b5cea8">232</span><span style="color:#d4d4d4">,</span><span style="color:#d4d4d4"> </span><span style="color:#b5cea8">170</span><span style="color:#d4d4d4">,</span><span style="color:#d4d4d4"> </span><span style="color:#b5cea8">182</span><span style="color:#d4d4d4">,</span><span style="color:#d4d4d4"> </span><span style="color:#b5cea8">0.932</span><span style="color:#d4d4d4">)</span><span style="color:#d4d4d4">;</span></div>
<div class="mini" style="left:8px;top:24.00px"><span style="color:#d4d4d4">}</span></div>
<div class="mini" style="left:8px;top:32.00px"><span style="color:#d7ba7d">h1</span><span style="color:#d4d4d4"> </span><span style="color:#d4d4d4">{</span></div>
<div class="mini" style="left:8px;top:36.00px"><span style="color:#d4d4d4">    </span><span style="color:#9cdcfe">font-size</span><span style="color:#d4d4d4">:</span><span style="color:#d4d4d4"> </span><span style="color:#b5cea8">3em</span><span style="color:#d4d4d4">;</span></div>
<div class="mini" style="left:8px;top:40.00px"><span style="color:#d4d4d4">    </span><span style="color:#9cdcfe">font-family</span><span style="color:#d4d4d4">:</span><span style="color:#d4d4d4"> </span><span style="color:#ce9178">'Tharsa123'</span><span style="color:#d4d4d4">,</span><span style="color:#d4d4d4"> </span><span style="color:#ce9178">sans-serif</span><span style="color:#d4d4d4">;</span></div>
<div class="mini" style="left:8px;top:52.00px"><span style="color:#d4d4d4">}</span></div>
<div class="mini" style="left:8px;top:60.00px"><span style="color:#d7ba7d">.card</span><span style="color:#d4d4d4"> </span><span style="color:#d4d4d4">{</span></div>
<div class="mini" style="left:8px;top:64.00px"><span style="color:#d4d4d4">    </span><span style="color:#9cdcfe">text-align</span><span style="color:#d4d4d4">:</span><span style="color:#d4d4d4"> </span><span style="color:#ce9178">center</span><span style="color:#d4d4d4">;</span></div>
<div class="mini" style="left:8px;top:68.00px"><span style="color:#d4d4d4">    </span><span style="color:#9cdcfe">position</span><span style="color:#d4d4d4">:</span><span style="color:#d4d4d4"> </span><span style="color:#ce9178">relative</span><span style="color:#d4d4d4">;</span><span style="color:#d4d4d4"> </span><span style="color:#6a9955">/* Positioned relative to its</span></div>
<div class="mini" style="left:8px;top:72.00px"><span style="color:#d4d4d4">    </span><span style="color:#9cdcfe">border-radius</span><span style="color:#d4d4d4">:</span><span style="color:#d4d4d4"> </span><span style="color:#b5cea8">1em</span><span style="color:#d4d4d4">;</span></div>
<div class="mini" style="left:8px;top:76.00px"><span style="color:#d4d4d4">    </span><span style="color:#9cdcfe">box-sizing</span><span style="color:#d4d4d4">:</span><span style="color:#d4d4d4"> </span><span style="color:#ce9178">border-box</span><span style="color:#d4d4d4">;</span></div>
<div class="mini" style="left:8px;top:80.00px"><span style="color:#d4d4d4">    </span><span style="color:#9cdcfe">box-shadow</span><span style="color:#d4d4d4">:</span><span style="color:#d4d4d4"> </span><span style="color:#ce9178">none</span><span style="color:#d4d4d4">;</span></div>
<div class="mini" style="left:8px;top:84.00px"><span style="color:#d4d4d4">   </span><span style="color:#9cdcfe">background-color</span><span style="color:#d4d4d4">:</span><span style="color:#d4d4d4"> </span><span style="color:#dcdcaa">rgba</span><span style="color:#d4d4d4">(</span><span style="color:#b5cea8">187</span><span style="color:#d4d4d4">,</span><span style="color:#d4d4d4"> </span><span style="color:#b5cea8">199</span><span style="color:#d4d4d4">,</span><span style="color:#d4d4d4"> </span><span style="color:#b5cea8">185</span><span style="color:#d4d4d4">,</span><span style="color:#d4d4d4"> </span><span style="color:#b5cea8">0.932</span><span style="color:#d4d4d4">)</span><span style="color:#d4d4d4">;</span></div>
<div class="mini" style="left:8px;top:88.00px"><span style="color:#d4d4d4">   </span><span style="color:#9cdcfe">margin</span><span style="color:#d4d4d4">:</span><span style="color:#d4d4d4"> </span><span style="color:#b5cea8">5%</span><span style="color:#d4d4d4"> </span><span style="color:#b5cea8">5%</span><span style="color:#d4d4d4">;</span></div>
<div class="mini" style="left:8px;top:92.00px"><span style="color:#d4d4d4">   </span><span style="color:#9cdcfe">padding</span><span style="color:#d4d4d4">:</span><span style="color:#d4d4d4"> </span><span style="color:#b5cea8">3%</span><span style="color:#d4d4d4"> </span><span style="color:#b5cea8">5%</span><span style="color:#d4d4d4">;</span></div>
<div class="mini" style="left:8px;top:120.00px"><span style="color:#d4d4d4">}</span></div>
<div class="mini" style="left:8px;top:128.00px"><span style="color:#d7ba7d">.tom</span><span style="color:#d4d4d4"> </span><span style="color:#d4d4d4">{</span></div>
<div class="mini" style="left:8px;top:136.00px"><span style="color:#9cdcfe">text-align</span><span style="color:#d4d4d4">:</span><span style="color:#d4d4d4"> </span><span style="color:#ce9178">center</span><span style="color:#d4d4d4">;</span></div>
<div class="mini" style="left:8px;top:140.00px"><span style="color:#d4d4d4">    </span><span style="color:#9cdcfe">position</span><span style="color:#d4d4d4">:</span><span style="color:#d4d4d4"> </span><span style="color:#ce9178">relative</span><span style="color:#d4d4d4">;</span><span style="color:#d4d4d4"> </span><span style="color:#6a9955">/* Positioned relative to its</span></div>
<div class="mini" style="left:8px;top:144.00px"><span style="color:#d4d4d4">    </span><span style="color:#9cdcfe">border-radius</span><span style="color:#d4d4d4">:</span><span style="color:#d4d4d4"> </span><span style="color:#b5cea8">1em</span><span style="color:#d4d4d4">;</span></div>
<div class="mini" style="left:8px;top:148.00px"><span style="color:#d4d4d4">    </span><span style="color:#9cdcfe">box-sizing</span><span style="color:#d4d4d4">:</span><span style="color:#d4d4d4"> </span><span style="color:#ce9178">border-box</span><span style="color:#d4d4d4">;</span></div>
<div class="mini" style="left:8px;top:152.00px"><span style="color:#d4d4d4">    </span><span style="color:#9cdcfe">box-shadow</span><span style="color:#d4d4d4">:</span><span style="color:#d4d4d4"> </span><span style="color:#ce9178">none</span><span style="color:#d4d4d4">;</span></div>
<div class="mini" style="left:8px;top:160.00px"><span style="color:#d4d4d4">   </span><span style="color:#9cdcfe">margin</span><span style="color:#d4d4d4">:</span><span style="color:#d4d4d4"> </span><span style="color:#b5cea8">3%</span><span style="color:#d4d4d4"> </span><span style="color:#b5cea8">2%</span><span style="color:#d4d4d4">;</span></div>
<div class="mini" style="left:8px;top:164.00px"><span style="color:#d4d4d4">   </span><span style="color:#9cdcfe">padding</span><span style="color:#d4d4d4">:</span><span style="color:#d4d4d4"> </span><span style="color:#b5cea8">3%</span><span style="color:#d4d4d4"> </span><span style="color:#b5cea8">5%</span><span style="color:#d4d4d4">;</span></div>
<div class="mini" style="left:8px;top:168.00px"><span style="color:#d4d4d4">   </span><span style="color:#9cdcfe">height</span><span style="color:#d4d4d4">:</span><span style="color:#d4d4d4"> </span><span style="color:#b5cea8">170px</span><span style="color:#d4d4d4">;</span></div>
<div class="mini" style="left:8px;top:176.00px"><span style="color:#d4d4d4">}</span></div>
<div class="mini" style="left:8px;top:188.00px"><span style="color:#d7ba7d">.card</span><span style="color:#d4d4d4"> </span><span style="color:#d7ba7d">img</span><span style="color:#d4d4d4">  </span><span style="color:#d4d4d4">{</span></div>
<div class="mini" style="left:8px;top:196.00px"><span style="color:#d4d4d4">    </span><span style="color:#9cdcfe">width</span><span style="color:#d4d4d4">:</span><span style="color:#d4d4d4"> </span><span style="color:#b5cea8">32px</span><span style="color:#d4d4d4">;</span></div>
<div class="mini" style="left:8px;top:200.00px"><span style="color:#d4d4d4">    </span><span style="color:#9cdcfe">height</span><span style="color:#d4d4d4">:</span><span style="color:#d4d4d4"> </span><span style="color:#b5cea8">32px</span><span style="color:#d4d4d4">;</span></div>
<div class="mini" style="left:8px;top:212.00px"><span style="color:#d4d4d4">}</span></div>
<div class="mini" style="left:8px;top:220.00px"><span style="color:#d7ba7d">h2</span><span style="color:#d4d4d4"> </span><span style="color:#d4d4d4">{</span></div>
<div class="mini" style="left:8px;top:224.00px"><span style="color:#d4d4d4">    </span><span style="color:#9cdcfe">letter-spacing</span><span style="color:#d4d4d4">:</span><span style="color:#d4d4d4"> </span><span style="color:#b5cea8">0.1em</span><span style="color:#d4d4d4">;</span></div>
<div class="mini" style="left:8px;top:228.00px"><span style="color:#d4d4d4">}</span></div>
<div class="mini" style="left:8px;top:236.00px"><span style="color:#d7ba7d">footer</span><span style="color:#d4d4d4"> </span><span style="color:#d4d4d4">{</span></div>
<div class="mini" style="left:8px;top:240.00px"><span style="color:#d4d4d4">    </span><span style="color:#9cdcfe">justify-content</span><span style="color:#d4d4d4">:</span><span style="color:#d4d4d4"> </span><span style="color:#ce9178">center</span><span style="color:#d4d4d4">;</span></div>
<div class="mini" style="left:8px;top:244.00px"><span style="color:#d4d4d4">    </span><span style="color:#9cdcfe">text-align</span><span style="color:#d4d4d4">:</span><span style="color:#d4d4d4"> </span><span style="color:#ce9178">center</span><span style="color:#d4d4d4">;</span></div>
<div class="mini" style="left:8px;top:248.00px"><span style="color:#d4d4d4">    </span><span style="color:#9cdcfe">font-size</span><span style="color:#d4d4d4">:</span><span style="color:#d4d4d4"> </span><span style="color:#b5cea8">0.9rem</span><span style="color:#d4d4d4">;</span></div>
<div class="mini" style="left:8px;top:252.00px"><span style="color:#d4d4d4">    </span><span style="color:#9cdcfe">margin</span><span style="color:#d4d4d4">:</span><span style="color:#d4d4d4"> </span><span style="color:#b5cea8">5%</span><span style="color:#d4d4d4"> </span><span style="color:#b5cea8">0</span><span style="color:#d4d4d4">;</span></div>
<div class="mini" style="left:8px;top:256.00px"><span style="color:#d4d4d4">    </span><span style="color:#9cdcfe">font-size</span><span style="color:#d4d4d4">:</span><span style="color:#d4d4d4"> </span><span style="color:#b5cea8">20px</span><span style="color:#d4d4d4">;</span></div>
<div class="mini" style="left:8px;top:268.00px"><span style="color:#d4d4d4">}</span></div>
<div class="mini" style="left:8px;top:288.00px"><span style="color:#c586c0">@media</span><span style="color:#d4d4d4"> </span><span style="color:#c586c0">only</span><span style="color:#d4d4d4"> </span><span style="color:#ce9178">screen</span><span style="color:#d4d4d4"> </span><span style="color:#c586c0">and</span><span style="color:#d4d4d4"> </span><span style="color:#d4d4d4">(</span><span style="color:#9cdcfe">max-width</span><span style="color:#d4d4d4">:</span><span style="color:#d4d4d4"> </span><span style="color:#b5cea8">900px</span><span style="color:#d4d4d4">)</span><span style="color:#d4d4d4"> </span><span style="color:#d4d4d4">{</span><span style="color:#d4d4d4"> </span><span style="color:#6a9955">/* This will apply</span></div>
<div class="mini" style="left:8px;top:296.00px"><span style="color:#d4d4d4">        </span><span style="color:#d7ba7d">h1</span><span style="color:#d4d4d4"> </span><span style="color:#d4d4d4">{</span></div>
<div class="mini" style="left:8px;top:300.00px"><span style="color:#d4d4d4">            </span><span style="color:#9cdcfe">text-align</span><span style="color:#d4d4d4">:</span><span style="color:#d4d4d4"> </span><span style="color:#ce9178">center</span><span style="color:#d4d4d4">;</span></div>
<div class="mini" style="left:8px;top:304.00px"><span style="color:#d4d4d4">            </span><span style="color:#9cdcfe">margin</span><span style="color:#d4d4d4">:</span><span style="color:#d4d4d4"> </span><span style="color:#b5cea8">10px</span><span style="color:#d4d4d4">;</span></div>
<div class="mini" style="left:8px;top:312.00px"><span style="color:#d4d4d4">        </span><span style="color:#d4d4d4">}</span></div>
<div class="mini" style="left:8px;top:320.00px"><span style="color:#d4d4d4">        </span><span style="color:#d7ba7d">.card</span><span style="color:#d4d4d4"> </span><span style="color:#d4d4d4">{</span></div>
<div class="mini" style="left:8px;top:324.00px"><span style="color:#d4d4d4">            </span><span style="color:#9cdcfe">margin</span><span style="color:#d4d4d4">:</span><span style="color:#d4d4d4"> </span><span style="color:#b5cea8">10px</span><span style="color:#d4d4d4">;</span></div>
<div class="mini" style="left:8px;top:328.00px"><span style="color:#d4d4d4">            </span><span style="color:#9cdcfe">bottom</span><span style="color:#d4d4d4">:</span><span style="color:#d4d4d4"> </span><span style="color:#b5cea8">20em</span><span style="color:#d4d4d4">;</span></div>
<div class="mini" style="left:8px;top:332.00px"><span style="color:#d4d4d4">        </span><span style="color:#d4d4d4">}</span></div>
<div class="mini" style="left:8px;top:364.00px"><span style="color:#d4d4d4">    </span><span style="color:#d4d4d4">}</span></div>
<div class="mini" style="left:8px;top:372.00px"><span style="color:#d4d4d4">  </span><span style="color:#c586c0">@media</span><span style="color:#d4d4d4"> </span><span style="color:#c586c0">only</span><span style="color:#d4d4d4"> </span><span style="color:#ce9178">screen</span><span style="color:#d4d4d4"> </span><span style="color:#c586c0">and</span><span style="color:#d4d4d4"> </span><span style="color:#d4d4d4">(</span><span style="color:#9cdcfe">max-width</span><span style="color:#d4d4d4">:</span><span style="color:#d4d4d4"> </span><span style="color:#b5cea8">600px</span><span style="color:#d4d4d4">)</span><span style="color:#d4d4d4"> </span><span style="color:#d4d4d4">{</span><span style="color:#d4d4d4"> </span><span style="color:#6a9955">/* This will apply</span></div>
<div class="mini" style="left:8px;top:380.00px"><span style="color:#d4d4d4">        </span><span style="color:#d7ba7d">h1</span><span style="color:#d4d4d4"> </span><span style="color:#d4d4d4">{</span></div>
<div class="mini" style="left:8px;top:384.00px"><span style="color:#d4d4d4">            </span><span style="color:#9cdcfe">text-align</span><span style="color:#d4d4d4">:</span><span style="color:#d4d4d4"> </span><span style="color:#ce9178">center</span><span style="color:#d4d4d4">;</span></div>
<div class="mini" style="left:8px;top:388.00px"><span style="color:#d4d4d4">            </span><span style="color:#9cdcfe">margin</span><span style="color:#d4d4d4">:</span><span style="color:#d4d4d4"> </span><span style="color:#b5cea8">10px</span><span style="color:#d4d4d4">;</span></div>
<div class="mini" style="left:8px;top:392.00px"><span style="color:#d4d4d4">            </span><span style="color:#9cdcfe">padding</span><span style="color:#d4d4d4">:</span><span style="color:#d4d4d4"> </span><span style="color:#b5cea8">10px</span><span style="color:#d4d4d4">;</span></div>
<div class="mini" style="left:8px;top:400.00px"><span style="color:#d4d4d4">        </span><span style="color:#d4d4d4">}</span></div>
<div class="mini" style="left:8px;top:408.00px"><span style="color:#d4d4d4">        </span><span style="color:#d7ba7d">.card</span><span style="color:#d4d4d4"> </span><span style="color:#d4d4d4">{</span></div>
<div class="mini" style="left:8px;top:412.00px"><span style="color:#d4d4d4">            </span><span style="color:#9cdcfe">margin</span><span style="color:#d4d4d4">:</span><span style="color:#d4d4d4"> </span><span style="color:#b5cea8">10px</span><span style="color:#d4d4d4">;</span></div>
<div class="mini" style="left:8px;top:424.00px"><span style="color:#d4d4d4">        </span><span style="color:#d4d4d4">}</span></div>
<div class="mini" style="left:8px;top:444.00px"><span style="color:#d4d4d4">    </span><span style="color:#d4d4d4">}</span></div>
</div>
<div style="position:absolute;left:2722px;top:136px;width:6px;height:1611.2px;background:linear-gradient(to right,rgba(0,0,0,0),rgba(0,0,0,0.35))"></div>
<div style="position:absolute;left:2846.00px;top:136.00px;width:34.00px;height:1611.20px;background:#1e1e1e;"></div>
<div style="position:absolute;left:2846.00px;top:136.00px;width:1.20px;height:1611.20px;background:#3a3a3a;"></div>
<div style="position:absolute;left:2846.00px;top:136.00px;width:34.00px;height:1.20px;background:#3a3a3a;"></div>
<div style="position:absolute;left:2847.00px;top:472.00px;width:33.00px;height:402.00px;background:#424242;"></div>
<div style="position:absolute;left:2847.00px;top:177.00px;width:33.00px;height:3.70px;background:#8a8a88;"></div>
<div style="position:absolute;left:2857.00px;top:177.00px;width:13.00px;height:14.00px;background:#a6a6a6;"></div>
<div style="position:absolute;left:1868.00px;top:1718.00px;width:354.00px;height:29.20px;background:#424242;"></div>
<div style="position:absolute;left:523.2px;top:136px;width:1184.8px;height:8px;background:linear-gradient(rgba(0,0,0,0.45),rgba(0,0,0,0))"></div>
<div style="position:absolute;left:1712px;top:136px;width:1168px;height:8px;background:linear-gradient(rgba(0,0,0,0.45),rgba(0,0,0,0))"></div>
<div style="position:absolute;left:0.00px;top:1747.20px;width:2880.00px;height:52.80px;background:#007acc;"></div>
<svg style="left:0;top:1740px" width="2880" height="60" fill="none" stroke="#ffffff" stroke-width="2.4"><circle cx="52.5" cy="33.4" r="13.2"/><path d="M46.5 27.4 L58.5 39.4 M58.5 27.4 L46.5 39.4"/><path d="M119.5 20 L133 44.5 H106 Z" stroke-linejoin="round"/><path d="M119.5 28 V37" /><circle cx="119.5" cy="40.5" r="0.6" fill="#fff"/><circle cx="2750.4" cy="32.1" r="5.8" stroke-width="2.2"/><path d="M2741.5 47.7 A9.3 9.3 0 0 1 2760 47.7" stroke-width="2.2"/><path d="M2748.8 23.9 V19.2 H2768.9 V32.1 H2766.3 L2761.3 37.1 V32.1 H2759.7" stroke-width="2.2"/><path d="M2816 42.4 H2838.5 L2836.4 35.5 V29 Q2836.4 20.4 2827.2 20.4 Q2818.2 20.4 2818.2 29 V35.5 Z" stroke-width="2.2" stroke-linejoin="round"/><path d="M2823.6 43 A3.6 3.6 0 0 0 2830.8 43" stroke-width="2.2"/></svg>
<div class="t" style="left:78.30px;top:1773.70px;font-family:'Liberation Sans',sans-serif;font-size:29.6px;color:#ffffff;font-weight:normal;font-style:normal;">0</div>
<div class="t" style="left:145.00px;top:1773.70px;font-family:'Liberation Sans',sans-serif;font-size:29.6px;color:#ffffff;font-weight:normal;font-style:normal;">0</div>
<div class="t" style="left:2080.70px;top:1773.70px;font-family:'Liberation Sans',sans-serif;font-size:29.6px;color:#ffffff;font-weight:normal;font-style:normal;">Ln 5, Col 48</div>
<div class="t" style="left:2279.00px;top:1773.70px;font-family:'Liberation Sans',sans-serif;font-size:29.6px;color:#ffffff;font-weight:normal;font-style:normal;">Spaces: 4</div>
<div class="t" style="left:2449.80px;top:1773.70px;font-family:'Liberation Sans',sans-serif;font-size:29.6px;color:#ffffff;font-weight:normal;font-style:normal;">UTF-8</div>
<div class="t" style="left:2573.80px;top:1773.70px;font-family:'Liberation Sans',sans-serif;font-size:29.6px;color:#ffffff;font-weight:normal;font-style:normal;">LF</div>
<div class="t" style="left:2644.40px;top:1773.70px;font-family:'Liberation Sans',sans-serif;font-size:29.6px;color:#ffffff;font-weight:normal;font-style:normal;">CSS</div>
</body></html>
